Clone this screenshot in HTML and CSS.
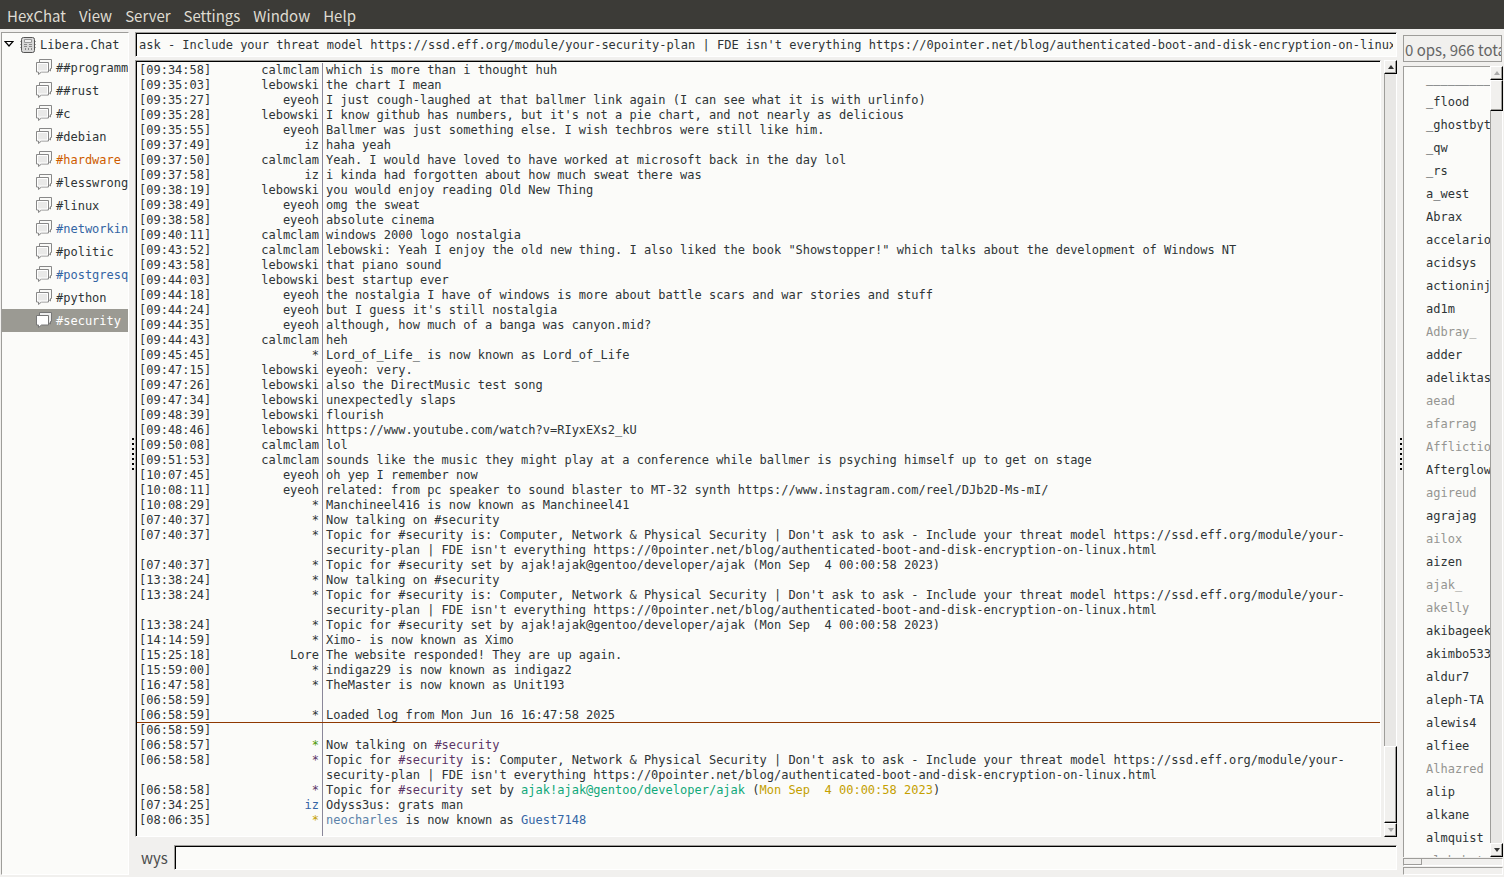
FILE: index.html
```
<!DOCTYPE html>
<html lang="en">
<head>
    <meta charset="UTF-8">
    <title>HexChat: wys @ Libera.Chat / #security</title>
    <link rel="stylesheet" href="styles.css">
</head>
<body>
    <svg class="defs" aria-hidden="true">
        <symbol id="bubble" viewBox="0 0 16 16">
            <path d="M3.500 3.500v-3h12v9h-1v2.500l-2.500-2" fill="#fafaf8" stroke="#888" />
            <path d="M.5 3.500h12v9.500h-7l-3 2.500v-2.500h-2z" fill="#e9e9e8" stroke="#888" />
            <path d="M1.500 4.500h10v7.500h-10z" fill="none" stroke="#fff" />
        </symbol>
        <symbol id="bubble-on" viewBox="0 0 16 16">
            <path d="M3.500 3.500v-3h12v9h-1v2.500l-2.500-2" fill="#eee" stroke="#777" />
            <path d="M.5 3.500h12v9.500h-7l-3 2.500v-2.500h-2z" fill="#fff" stroke="#777" />
        </symbol>
        <symbol id="server" viewBox="0 0 16 16">
            <path d="M0 4.500h2M0 7.500h2M0 10.500h2M14 4.500h2M14 7.500h2M14 10.500h2" stroke="#aaa" />
            <rect x="1.500" y=".5" width="13" height="15" rx="2" fill="#d8d8d8" stroke="#555" />
            <path d="M4.500 2.500h7v3h-7z" fill="#eee" stroke="#999" />
            <path d="M4 7.500h3M4 9.500h3M9 7.500h3M9 9.500h3M5.500 11v2M8.500 11v2M11.500 11v2" stroke="#888" />
        </symbol>
    </svg>
    <nav class="menubar">
        <button>HexChat</button>
        <button>View</button>
        <button>Server</button>
        <button>Settings</button>
        <button>Window</button>
        <button>Help</button>
    </nav>
    <div class="window">
        <aside class="tree">
            <button class="server"><svg class="expander" viewBox="0 0 10 6"><path d="M1 .5h8l-4 4.500z" fill="#fff" stroke="#000" stroke-width="1.200" /></svg><svg class="icon"><use href="#server" /></svg>Libera.Chat</button>
            <button><svg class="icon"><use href="#bubble" /></svg>##programming</button>
            <button><svg class="icon"><use href="#bubble" /></svg>##rust</button>
            <button><svg class="icon"><use href="#bubble" /></svg>#c</button>
            <button><svg class="icon"><use href="#bubble" /></svg>#debian</button>
            <button class="message"><svg class="icon"><use href="#bubble" /></svg>#hardware</button>
            <button><svg class="icon"><use href="#bubble" /></svg>#lesswrong</button>
            <button><svg class="icon"><use href="#bubble" /></svg>#linux</button>
            <button class="data"><svg class="icon"><use href="#bubble" /></svg>#networking</button>
            <button><svg class="icon"><use href="#bubble" /></svg>#politic</button>
            <button class="data"><svg class="icon"><use href="#bubble" /></svg>#postgresql</button>
            <button><svg class="icon"><use href="#bubble" /></svg>#python</button>
            <button class="selected"><svg class="icon"><use href="#bubble-on" /></svg>#security</button>
        </aside>
        <div class="handle"></div>
        <main class="session">
            <input class="topic" aria-label="Topic" value="ask - Include your threat model https://ssd.eff.org/module/your-security-plan | FDE isn't everything https://0pointer.net/blog/authenticated-boot-and-disk-encryption-on-linux.html">
            <div class="output">
                <ul class="log">
                    <li><time>[09:34:58]</time><b>calmclam</b><p>which is more than i thought huh</p></li>
                    <li><time>[09:35:03]</time><b>lebowski</b><p>the chart I mean</p></li>
                    <li><time>[09:35:27]</time><b>eyeoh</b><p>I just cough-laughed at that ballmer link again (I can see what it is with urlinfo)</p></li>
                    <li><time>[09:35:28]</time><b>lebowski</b><p>I know github has numbers, but it's not a pie chart, and not nearly as delicious</p></li>
                    <li><time>[09:35:55]</time><b>eyeoh</b><p>Ballmer was just something else. I wish techbros were still like him.</p></li>
                    <li><time>[09:37:49]</time><b>iz</b><p>haha yeah</p></li>
                    <li><time>[09:37:50]</time><b>calmclam</b><p>Yeah. I would have loved to have worked at microsoft back in the day lol</p></li>
                    <li><time>[09:37:58]</time><b>iz</b><p>i kinda had forgotten about how much sweat there was</p></li>
                    <li><time>[09:38:19]</time><b>lebowski</b><p>you would enjoy reading Old New Thing</p></li>
                    <li><time>[09:38:49]</time><b>eyeoh</b><p>omg the sweat</p></li>
                    <li><time>[09:38:58]</time><b>eyeoh</b><p>absolute cinema</p></li>
                    <li><time>[09:40:11]</time><b>calmclam</b><p>windows 2000 logo nostalgia</p></li>
                    <li><time>[09:43:52]</time><b>calmclam</b><p>lebowski: Yeah I enjoy the old new thing. I also liked the book "Showstopper!" which talks about the development of Windows NT</p></li>
                    <li><time>[09:43:58]</time><b>lebowski</b><p>that piano sound</p></li>
                    <li><time>[09:44:03]</time><b>lebowski</b><p>best startup ever</p></li>
                    <li><time>[09:44:18]</time><b>eyeoh</b><p>the nostalgia I have of windows is more about battle scars and war stories and stuff</p></li>
                    <li><time>[09:44:24]</time><b>eyeoh</b><p>but I guess it's still nostalgia</p></li>
                    <li><time>[09:44:35]</time><b>eyeoh</b><p>although, how much of a banga was canyon.mid?</p></li>
                    <li><time>[09:44:43]</time><b>calmclam</b><p>heh</p></li>
                    <li><time>[09:45:45]</time><b>*</b><p>Lord_of_Life_ is now known as Lord_of_Life</p></li>
                    <li><time>[09:47:15]</time><b>lebowski</b><p>eyeoh: very.</p></li>
                    <li><time>[09:47:26]</time><b>lebowski</b><p>also the DirectMusic test song</p></li>
                    <li><time>[09:47:34]</time><b>lebowski</b><p>unexpectedly slaps</p></li>
                    <li><time>[09:48:39]</time><b>lebowski</b><p>flourish</p></li>
                    <li><time>[09:48:46]</time><b>lebowski</b><p>https://www.youtube.com/watch?v=RIyxEXs2_kU</p></li>
                    <li><time>[09:50:08]</time><b>calmclam</b><p>lol</p></li>
                    <li><time>[09:51:53]</time><b>calmclam</b><p>sounds like the music they might play at a conference while ballmer is psyching himself up to get on stage</p></li>
                    <li><time>[10:07:45]</time><b>eyeoh</b><p>oh yep I remember now</p></li>
                    <li><time>[10:08:11]</time><b>eyeoh</b><p>related: from pc speaker to sound blaster to MT-32 synth https://www.instagram.com/reel/DJb2D-Ms-mI/</p></li>
                    <li><time>[10:08:29]</time><b>*</b><p>Manchineel416 is now known as Manchineel41</p></li>
                    <li><time>[07:40:37]</time><b>*</b><p>Now talking on #security</p></li>
                    <li><time>[07:40:37]</time><b>*</b><p>Topic for #security is: Computer, Network &amp; Physical Security | Don't ask to ask - Include your threat model https://ssd.eff.org/module/your-security-plan | FDE isn't everything https://0pointer.net/blog/authenticated-boot-and-disk-encryption-on-linux.html</p></li>
                    <li><time>[07:40:37]</time><b>*</b><p>Topic for #security set by ajak!ajak@gentoo/developer/ajak (Mon Sep  4 00:00:58 2023)</p></li>
                    <li><time>[13:38:24]</time><b>*</b><p>Now talking on #security</p></li>
                    <li><time>[13:38:24]</time><b>*</b><p>Topic for #security is: Computer, Network &amp; Physical Security | Don't ask to ask - Include your threat model https://ssd.eff.org/module/your-security-plan | FDE isn't everything https://0pointer.net/blog/authenticated-boot-and-disk-encryption-on-linux.html</p></li>
                    <li><time>[13:38:24]</time><b>*</b><p>Topic for #security set by ajak!ajak@gentoo/developer/ajak (Mon Sep  4 00:00:58 2023)</p></li>
                    <li><time>[14:14:59]</time><b>*</b><p>Ximo- is now known as Ximo</p></li>
                    <li><time>[15:25:18]</time><b>Lore</b><p>The website responded! They are up again.</p></li>
                    <li><time>[15:59:00]</time><b>*</b><p>indigaz29 is now known as indigaz2</p></li>
                    <li><time>[16:47:58]</time><b>*</b><p>TheMaster is now known as Unit193</p></li>
                    <li><time>[06:58:59]</time><b></b><p></p></li>
                    <li><time>[06:58:59]</time><b>*</b><p>Loaded log from Mon Jun 16 16:47:58 2025</p></li>
                    <li class="marker"><time>[06:58:59]</time><b></b><p></p></li>
                    <li><time>[06:58:57]</time><b class="green">*</b><p>Now talking on <span class="purple">#security</span></p></li>
                    <li><time>[06:58:58]</time><b class="purple">*</b><p>Topic for <span class="purple">#security</span> is: Computer, Network &amp; Physical Security | Don't ask to ask - Include your threat model https://ssd.eff.org/module/your-security-plan | FDE isn't everything https://0pointer.net/blog/authenticated-boot-and-disk-encryption-on-linux.html</p></li>
                    <li><time>[06:58:58]</time><b class="purple">*</b><p>Topic for <span class="purple">#security</span> set by <span class="teal">ajak!ajak@gentoo/developer/ajak</span> (<span class="yellow">Mon Sep  4 00:00:58 2023</span>)</p></li>
                    <li><time>[07:34:25]</time><b class="blue">iz</b><p>Odyss3us: grats man</p></li>
                    <li><time>[08:06:35]</time><b class="yellow">*</b><p><span class="steel">neocharles</span> is now known as <span class="blue">Guest7148</span></p></li>
                    <li class="rest"><span></span><b></b></li>
                </ul>
                <div class="scrollbar">
                    <button class="up" aria-label="Scroll up"></button>
                    <div class="trough at-end"><div class="thumb"></div></div>
                    <button class="down off" aria-label="Scroll down"></button>
                </div>
            </div>
            <div class="entry">
                <label for="message">wys</label>
                <input id="message">
            </div>
        </main>
        <div class="handle"></div>
        <aside class="users">
            <div class="count">0 ops, 966 total</div>
            <div class="userlist">
                <ul class="nicks">
                    <li>_________</li>
                    <li>_flood</li>
                    <li>_ghostbyte</li>
                    <li>_qw</li>
                    <li>_rs</li>
                    <li>a_west</li>
                    <li>Abrax</li>
                    <li>accelario</li>
                    <li>acidsys</li>
                    <li>actioninja</li>
                    <li>ad1m</li>
                    <li class="away">Adbray_</li>
                    <li>adder</li>
                    <li>adeliktas</li>
                    <li class="away">aead</li>
                    <li class="away">afarrag</li>
                    <li class="away">Affliction</li>
                    <li>Afterglow</li>
                    <li class="away">agireud</li>
                    <li>agrajag</li>
                    <li class="away">ailox</li>
                    <li>aizen</li>
                    <li class="away">ajak_</li>
                    <li class="away">akelly</li>
                    <li>akibageek</li>
                    <li>akimbo533</li>
                    <li>aldur7</li>
                    <li>aleph-TA</li>
                    <li>alewis4</li>
                    <li>alfiee</li>
                    <li class="away">Alhazred</li>
                    <li>alip</li>
                    <li>alkane</li>
                    <li>almquist</li>
                    <li class="away">alphabeta</li>
                </ul>
                <div class="scrollbar">
                    <button class="up off" aria-label="Scroll up"></button>
                    <div class="trough"><div class="thumb small"></div></div>
                    <button class="down" aria-label="Scroll down"></button>
                </div>
            </div>
            <div class="meter"><div class="fill"></div></div>
            <div class="meter"></div>
        </aside>
    </div>
</body>
</html>
```
FILE: styles.css
```
:root {
    --bg: #f1f0ee;
    --base: #fbfbf9;
    --text: #2e3436;
    --edge: #9e9d9a;
    --trough: #e8e7e5; }
* { box-sizing: border-box; }
html, body { height: 100%; margin: 0; }
body {
    display: flex;
    flex-direction: column;
    overflow: hidden;
    background: var(--bg);
    color: var(--text);
    font: 12px/15px "DejaVu Sans Mono", monospace; }
button, input {
    font: inherit;
    color: inherit;
    border: 0;
    padding: 0;
    background: none;
    border-radius: 0;
    outline: none; }
ul, p { margin: 0; padding: 0; list-style: none; }
.defs { display: none; }

.menubar {
    display: flex;
    flex: none;
    gap: 13px;
    height: 29px;
    padding: 2px 7px 0;
    background: #3c3b37;
    color: #dfdbd2;
    font: 15px/27px "Noto Sans CJK SC", "Noto Sans", sans-serif; }

.window {
    flex: 1;
    min-height: 0;
    display: flex;
    padding: 3px 1px 2px; }

.tree {
    width: 128px;
    flex: none;
    overflow: hidden;
    background: var(--base);
    border: 1px solid #fff;
    border-top-color: var(--edge);
    border-left-color: var(--edge); }
.tree button {
    display: flex;
    align-items: center;
    gap: 4px;
    width: 100%;
    height: 23px;
    padding: 2px 0 0 34px;
    white-space: nowrap;
    overflow: hidden; }
.tree .server { padding-left: 2px; }
.tree .message { color: #ce5c00; }
.tree .data { color: #3465a4; }
.tree .selected { background: #9b9a93; color: #fff; }
.icon { width: 16px; height: 16px; flex: none; margin-bottom: 3px; }
.server .icon { margin-bottom: 1px; }
.expander { width: 10px; height: 6px; flex: none; margin: 0 0 3px; }
.server .expander + .icon { margin-left: 2px; }

.handle {
    width: 6px;
    flex: none;
    display: flex;
    align-items: center;
    justify-content: flex-end;
    padding-right: 1px; }
.handle::before {
    content: "";
    width: 2px;
    height: 32px;
    background: repeating-linear-gradient(#000 0 2px, transparent 2px 5px); }

.session {
    flex: 1;
    min-width: 0;
    display: flex;
    flex-direction: column; }
.topic, .log, .entry input {
    background: var(--base);
    border: 1px solid #fff;
    border-top-color: var(--edge);
    border-left-color: var(--edge);
    box-shadow: inset 1px 1px #000; }
.topic { height: 25px; width: 100%; padding: 1px 3px 0; }
.output {
    flex: 1;
    min-height: 0;
    display: flex;
    gap: 3px;
    margin-top: 3px; }
.log {
    flex: 1;
    min-width: 0;
    display: flex;
    flex-direction: column;
    overflow: hidden;
    padding: 2px 0 0 1px; }
.log li {
    display: grid;
    grid-template-columns: 72px 114px 1fr;
    flex: none; }
.log time { padding-left: 2px; }
.log b {
    font-weight: normal;
    text-align: right;
    padding-right: 3px;
    border-right: 1px solid #8a8799; }
.log p { padding: 0 2px 0 3px; white-space: pre-wrap; }
.log .marker { box-shadow: 0 -1px #8f3902; }
.log .rest { flex: 1; }

.log .green { color: #4e9a06; }
.log .purple { color: #5c3566; }
.log .teal { color: #11a879; }
.log .yellow { color: #c4a000; }
.log .blue { color: #3465a4; }
.log .steel { color: #5b82a8; }
/* keep the divider grey next to coloured nicks */
.log b[class] { border-right-color: #8a8799; }

.scrollbar {
    width: 13px;
    flex: none;
    display: flex;
    flex-direction: column; }
.scrollbar button, .thumb {
    background: var(--bg);
    border: 1px solid #fff;
    border-right-color: #000;
    border-bottom-color: #000;
    box-shadow: inset -1px -1px var(--edge); }
.scrollbar button {
    height: 14px;
    flex: none;
    display: flex;
    align-items: center;
    justify-content: center; }
.scrollbar button::before {
    content: "";
    border: 3px solid transparent;
    border-top-width: 0;
    border-bottom: 4px solid #333; }
.scrollbar .down::before { transform: rotate(180deg); }
.scrollbar .off::before { border-bottom-color: #aaa; }
.trough {
    flex: 1;
    display: flex;
    flex-direction: column;
    background: var(--trough);
    border-left: 1px solid var(--edge);
    border-right: 1px solid #fff; }
.trough .thumb { height: 77px; margin: 0 -1px; }
.trough .small { height: 31px; }
.at-end { justify-content: flex-end; }

.entry {
    display: flex;
    flex: none;
    margin: 8px 0 4px; }
.entry label {
    width: 39px;
    padding-left: 6px;
    color: #4c4c4c;
    font: 15px/26px "Noto Sans CJK SC", "Noto Sans", sans-serif; }
.entry input { flex: 1; height: 25px; min-width: 0; padding: 0 3px; }

.users {
    width: 100px;
    flex: none;
    display: flex;
    flex-direction: column; }
.count {
    height: 27px;
    margin: 3px 1px 4px 0;
    padding-left: 1px;
    overflow: hidden;
    white-space: nowrap;
    border: 1px solid var(--edge);
    color: #666;
    font: 15px/27px "Noto Sans CJK SC", "Noto Sans", sans-serif; }
.userlist { flex: 1; min-height: 0; display: flex; }
.nicks {
    flex: 1;
    min-width: 0;
    overflow: hidden;
    padding-top: 1px;
    background: var(--base);
    border-top: 1px solid var(--edge);
    border-left: 1px solid var(--edge); }
.nicks li { padding-left: 22px; line-height: 23px; }
.nicks .away { color: #959591; }
.meter {
    height: 8px;
    flex: none;
    margin-top: 1px;
    border: 1px solid #fff;
    border-top-color: var(--edge);
    border-left-color: var(--edge); }
.fill {
    width: 18px;
    height: 6px;
    border-right: 1px solid var(--edge);
    border-bottom: 1px solid var(--edge); }
```
